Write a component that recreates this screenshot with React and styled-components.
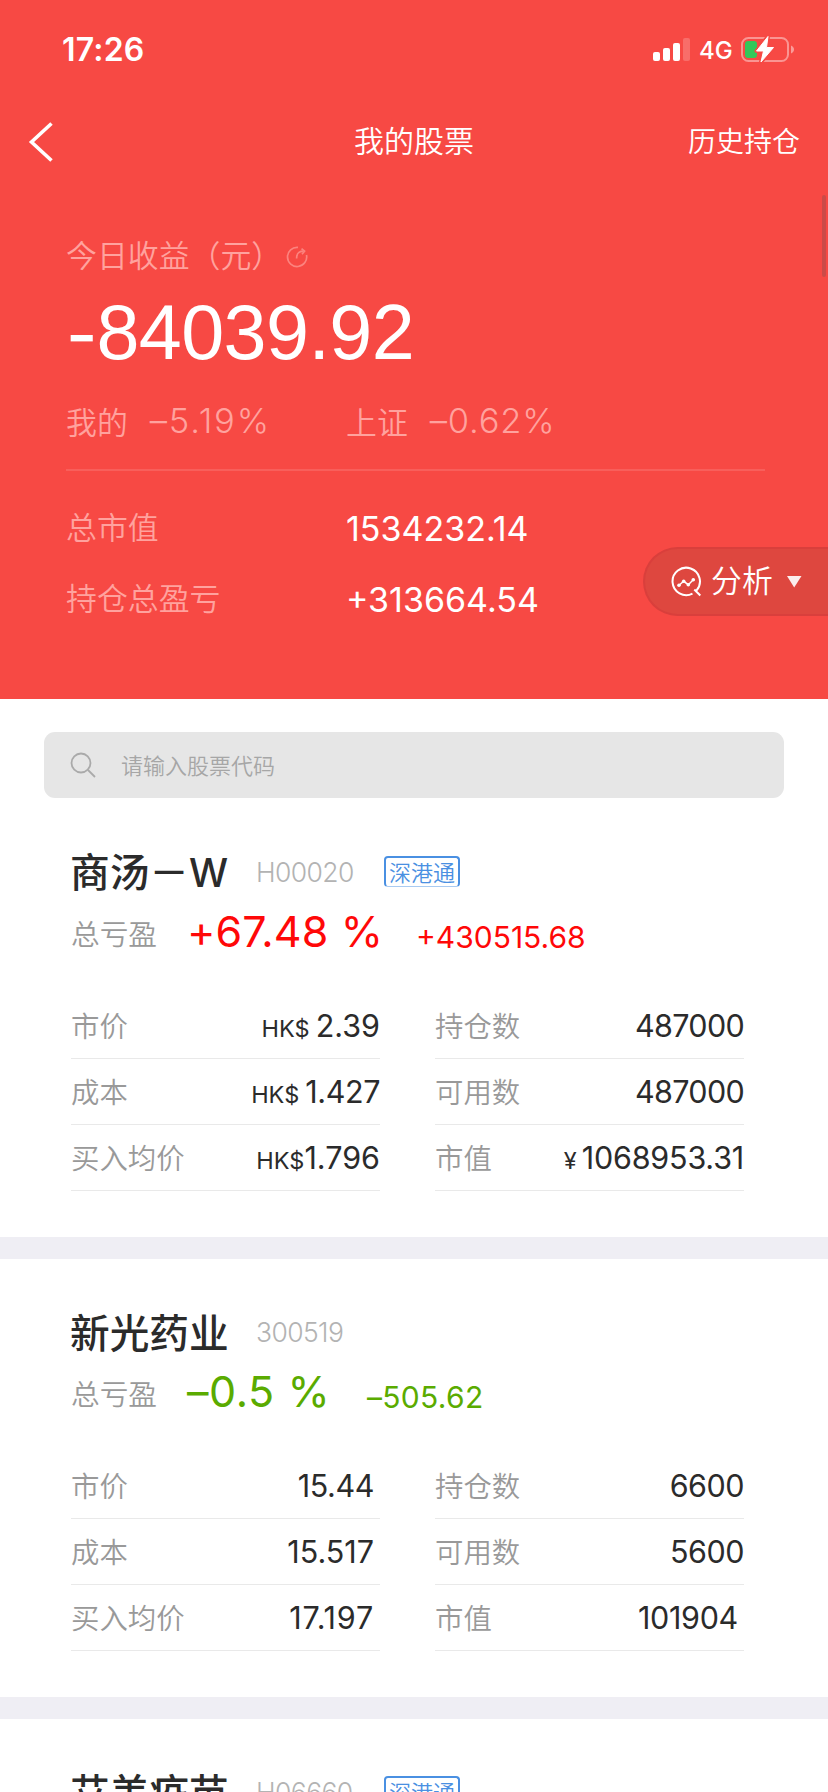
import React from "react";
import styled, { createGlobalStyle, css } from "styled-components";

const Global = createGlobalStyle`
  * { box-sizing: border-box; }
  body { margin: 0; background: #fff; }
`;

const latin = css`
  font-family: Inter, "Noto Sans CJK SC", sans-serif;
`;

const Page = styled.main`
  width: 828px;
  height: 1792px;
  overflow: hidden;
  background: #fff;
  font-family: "Noto Sans CJK SC", Inter, sans-serif;
  font-weight: 350;
  white-space: pre;
  position: relative;
`;

const Header = styled.header`
  height: 699px;
  background: #f74944;
  color: #fff;
  position: relative;
`;

const StatusBar = styled.div`
  height: 100px;
  padding: 0 33px 0 62px;
  display: flex;
  justify-content: space-between;
`;

const Clock = styled.div`
  ${latin}
  font-weight: 600;
  font-size: 32px;
  line-height: 40px;
  padding-top: 30px;
  letter-spacing: 0.2px;
`;

const StatusIcons = styled.div`
  display: flex;
  height: 28px;
  margin-top: 37px;
`;

const Network = styled.span`
  ${latin}
  font-weight: 450;
  font-size: 24px;
  line-height: 28px;
  width: 42px;
  margin-left: 8px;
`;

const NavBar = styled.nav`
  height: 80px;
  padding: 0 28px 0 28px;
  display: grid;
  grid-template-columns: 1fr auto 1fr;
  align-items: center;
  svg { display: block; margin-top: 2px; }
`;

const Title = styled.h1`
  margin: 0;
  font-size: 30px;
  font-weight: 350;
  line-height: 78px;
  padding-bottom: 3px;
`;

const NavLink = styled.span`
  justify-self: end;
  font-size: 28px;
  line-height: 78px;
  padding-bottom: 2px;
`;

const ScrollThumb = styled.div`
  position: absolute;
  right: 2px;
  top: 195px;
  width: 4px;
  height: 82px;
  border-radius: 2px;
  background: #cb4b48;
`;

const Summary = styled.section`
  padding: 53px 63px 0 66px;
`;

const Caption = styled.div`
  display: flex;
  align-items: center;
  font-size: 30.9px;
  line-height: 42px;
  color: #ffa29e;
  svg { margin: 5px 0 0 4px; }
`;

const BigAmount = styled.div`
  font-family: "Liberation Sans", Arial, sans-serif;
  font-weight: 400;
  font-size: 77.3px;
  line-height: 88px;
  margin-top: 13px;
  letter-spacing: -0.6px;
`;

const Minus = styled.span`
  ${latin}
  font-size: 68px;
  font-weight: 500;
  line-height: 60px;
  letter-spacing: -1px;
`;

const Compare = styled.div`
  display: grid;
  grid-template-columns: 280px 1fr;
  height: 84px;
  padding-top: 12px;
  margin-top: 11px;
  border-bottom: 2px solid #f85f5b;
  color: #ffa29e;
`;

const CompareItem = styled.div`
  display: flex;
  align-items: baseline;
  font-size: 30.9px;
  line-height: 44px;
`;

const Rate = styled.span`
  ${latin}
  font-size: 34.5px;
  margin-left: 22px;
  letter-spacing: ${(p) => p.$ls || 0}px;
  position: relative;
  top: -1px;
`;

const Totals = styled.div`
  display: grid;
  grid-template-columns: 280px 1fr;
  grid-auto-rows: 71px;
  padding-top: 19px;
`;

const TotalLabel = styled.span`
  font-size: 30.9px;
  line-height: 71px;
  color: #ffa29e;
`;

const TotalValue = styled.span`
  ${latin}
  font-weight: 400;
  font-size: 34px;
  line-height: 78px;
`;

const Analysis = styled.button`
  position: absolute;
  right: 0;
  top: 547px;
  width: 185px;
  height: 69px;
  padding: 0 0 0 26px;
  border: 2px solid #d93f3c;
  border-right: 0;
  border-radius: 35px 0 0 35px;
  background: #de473f;
  color: #fff;
  font: 350 30.9px/56px "Noto Sans CJK SC", sans-serif;
  display: flex;
  align-items: center;
`;

const AnalysisText = styled.span`
  margin: 0 13px 0 8px;
  padding-bottom: 5px;
`;

const Search = styled.div`
  margin: 33px 44px 0;
  height: 66px;
  border-radius: 11px;
  background: #e6e6e6;
  display: flex;
  align-items: center;
  padding-left: 26px;
  gap: 25px;
  font-size: 22px;
  color: #a6a6a6;
`;

const Placeholder = styled.span`
  line-height: 60px;
  padding-bottom: 3px;
`;

const Card = styled.article`
  height: 460px;
  padding: 36px 84px 0 71px;
  border-bottom: 22px solid #efeef4;
`;

const CardHead = styled.div`
  display: flex;
  align-items: center;
  height: 75px;
`;

const Name = styled.h2`
  margin: 0 0 0 -1px;
  font-family: "Noto Sans CJK SC", sans-serif;
  font-weight: 500;
  font-size: 39.7px;
  line-height: 60px;
  padding-bottom: 3px;
  color: #2b2b2b;
  width: 186px;
  span { ${latin} font-size: 39px; }
`;

const Code = styled.span`
  ${latin}
  font-weight: 300;
  font-size: 26.5px;
  line-height: 40px;
  padding-bottom: 2px;
  color: #b3b3b3;
  width: 128px;
  letter-spacing: -0.6px;
`;

const Tag = styled.span`
  width: 76px;
  height: 31px;
  border: 2px solid #4a90e2;
  border-bottom: 1px solid #a9cbf2;
  border-radius: 4px;
  font-size: 22px;
  line-height: 26px;
  text-align: center;
  color: #4a90e2;
  margin-top: -2px;
`;

const Gain = styled.div`
  display: flex;
  align-items: baseline;
  height: 65px;
  margin-top: -4px;
  color: ${(p) => (p.$down ? "#5aab00" : "#ff0808")};
`;

const GainLabel = styled.span`
  font-size: 28.7px;
  line-height: 50px;
  color: #999;
  width: 116px;
  position: relative;
  top: -2px;
`;

const Percent = styled.span`
  ${latin}
  font-weight: 400;
  font-size: 43px;
  line-height: 50px;
  width: ${(p) => p.$w}px;
  letter-spacing: ${(p) => (p.$w < 200 ? 0.6 : 0.1)}px;
`;

const Amount = styled.span`
  ${latin}
  font-weight: 400;
  font-size: 30px;
  letter-spacing: ${(p) => p.$ls || 0}px;
  position: relative;
  top: 1px;
`;

const Grid = styled.div`
  display: grid;
  grid-template-columns: 309px 309px;
  column-gap: 55px;
  grid-auto-rows: 66px;
  margin-top: 22px;
`;

const Cell = styled.div`
  display: flex;
  justify-content: space-between;
  align-items: baseline;
  border-bottom: 1px solid #e9e9e9;
  padding-right: ${(p) => (p.$inset ? 6 : 0)}px;
  font-size: 28.4px;
  line-height: 63px;
  color: #999;
`;

const Value = styled.span`
  ${latin}
  font-weight: 400;
  font-size: 30.5px;
  color: #2b2b2b;
  letter-spacing: ${(p) => p.$ls || 0}px;
`;

const Currency = styled.span`
  font-size: 23.5px;
  letter-spacing: 0;
  margin-right: ${(p) => p.$gap || 0}px;
`;

const BackIcon = () => (
  <svg width="26" height="40" viewBox="0 0 26 40" fill="none" stroke="#fff" strokeWidth="3.6">
    <path d="M23.500 1.500 3.500 20 23.500 38.500" />
  </svg>
);

const SignalIcon = () => (
  <svg width="38" height="26" fill="#fff">
    <rect x="0" y="15" width="7" height="9" rx="2" />
    <rect x="10" y="11" width="7" height="13" rx="2" />
    <rect x="20" y="6" width="7" height="18" rx="2" />
    <rect x="30" y="1" width="7" height="23" rx="2" opacity=".2" />
  </svg>
);

const BatteryIcon = () => (
  <svg width="54" height="28" viewBox="0 0 54 28" overflow="visible">
    <rect x="1" y="1" width="46" height="23" rx="6.500" fill="none" stroke="#fff" strokeOpacity=".42" strokeWidth="2" />
    <path d="M50 8.500c4 1.500 4 6.500 0 8z" fill="#fff" opacity=".45" />
    <rect x="4" y="4" width="12" height="17" rx="3" fill="#34c759" />
    <path d="M27 -.5 15.500 14H22.500L20 25 32.500 10.500H25.500Z" fill="#f74944" stroke="#f74944" strokeWidth="4" strokeLinejoin="round" />
    <path d="M27 -.5 15.500 14H22.500L20 25 32.500 10.500H25.500Z" fill="#fff" stroke="#fff" strokeWidth="1" strokeLinejoin="round" />
  </svg>
);

const RefreshIcon = () => (
  <svg width="22" height="22" viewBox="0 0 22 22" fill="none" stroke="currentColor" strokeWidth="1.7" opacity=".65">
    <path d="M12 1.400A9.600 9.600 0 1 0 20.500 9" />
    <path d="M10.600 12.500c0-5 2-7.300 7-7.300" />
    <path d="M15.500 2.600 18.600 5.200 16 8.200" />
  </svg>
);

const AnalysisIcon = () => (
  <svg width="32" height="32" viewBox="0 0 32 32" fill="none" stroke="#fff" strokeWidth="2">
    <path d="M21.500 27.600A13.700 13.700 0 1 1 25.400 24.600M23.300 23.500l6 6" />
    <path d="M8 19.300 12.700 15.300 17.300 18.700 22.300 13.700" strokeWidth="1.500" />
    <g fill="#fff" stroke="none">
      <circle cx="8" cy="19.300" r="1.800" />
      <circle cx="12.700" cy="15.300" r="1.800" />
      <circle cx="17.300" cy="18.700" r="1.800" />
      <circle cx="22.300" cy="13.700" r="1.800" />
    </g>
  </svg>
);

const SearchIcon = () => (
  <svg width="26" height="26" viewBox="0 0 26 26" fill="none" stroke="#aaa" strokeWidth="1.8">
    <circle cx="11" cy="11" r="9.500" />
    <path d="M18 18l7 7" />
  </svg>
);

const stocks = [
  {
    name: "商汤－", suffix: "W", code: "H00020", tag: true,
    pct: "+67.48 %", pctW: 229, amt: "+430515.68",
    rows: [
      { k: "市价", cur: "HK$", gap: 6, v: "2.39" },
      { k: "持仓数", v: "487000", ls: -0.7 },
      { k: "成本", cur: "HK$", gap: 6, v: "1.427", ls: -0.4 },
      { k: "可用数", v: "487000", ls: -0.7 },
      { k: "买入均价", cur: "HK$", v: "1.796" },
      { k: "市值", cur: "¥", gap: 5, v: "1068953.31", ls: -0.2 },
    ],
  },
  {
    name: "新光药业", code: "300519", down: true,
    pct: "–0.5 %", pctW: 180, amt: "–505.62", amtLs: 0.3,
    rows: [
      { k: "市价", v: "15.44", inset: true, ls: -0.4 },
      { k: "持仓数", v: "6600", ls: -0.5 },
      { k: "成本", v: "15.517", inset: true },
      { k: "可用数", v: "5600", ls: -0.5 },
      { k: "买入均价", v: "17.197", inset: true, ls: 0.8 },
      { k: "市值", v: "101904", inset: true, ls: -0.3 },
    ],
  },
  { name: "艾美疫苗", code: "H06660", tag: true, rows: [] },
];

const StockCard = ({ s }) => (
  <Card>
    <CardHead>
      <Name>{s.name}{s.suffix && <span>{s.suffix}</span>}</Name>
      <Code>{s.code}</Code>
      {s.tag && <Tag>深港通</Tag>}
    </CardHead>
    {s.pct && (
      <Gain $down={s.down}>
        <GainLabel>总亏盈</GainLabel>
        <Percent $w={s.pctW}>{s.pct}</Percent>
        <Amount $ls={s.amtLs}>{s.amt}</Amount>
      </Gain>
    )}
    <Grid>
      {s.rows.map((r) => (
        <Cell key={r.k} $inset={r.inset}>
          {r.k}
          <Value $ls={r.ls}>
            {r.cur && <Currency $gap={r.gap}>{r.cur}</Currency>}
            {r.v}
          </Value>
        </Cell>
      ))}
    </Grid>
  </Card>
);

const List = styled.div`
  padding-top: 1px;
`;

export default function App() {
  return (
    <Page>
      <Global />
      <Header>
        <StatusBar>
          <Clock>17:26</Clock>
          <StatusIcons>
            <SignalIcon />
            <Network>4G</Network>
            <BatteryIcon />
          </StatusIcons>
        </StatusBar>
        <NavBar>
          <BackIcon />
          <Title>我的股票</Title>
          <NavLink>历史持仓</NavLink>
        </NavBar>
        <Summary>
          <Caption>今日收益（元）<RefreshIcon /></Caption>
          <BigAmount><Minus>-</Minus>84039.92</BigAmount>
          <Compare>
            <CompareItem>我的<Rate $ls={1.8}>–5.19%</Rate></CompareItem>
            <CompareItem>上证<Rate $ls={0.8}>–0.62%</Rate></CompareItem>
          </Compare>
          <Totals>
            <TotalLabel>总市值</TotalLabel>
            <TotalValue>1534232.14</TotalValue>
            <TotalLabel>持仓总盈亏</TotalLabel>
            <TotalValue>+313664.54</TotalValue>
          </Totals>
        </Summary>
        <ScrollThumb />
        <Analysis>
          <AnalysisIcon />
          <AnalysisText>分析</AnalysisText>
          <svg width="16" height="12" fill="#fff" opacity=".9"><path d="M1 0h14.500L8.200 11.500z" /></svg>
        </Analysis>
      </Header>
      <Search><SearchIcon /><Placeholder>请输入股票代码</Placeholder></Search>
      <List>
        {stocks.map((s) => <StockCard key={s.code} s={s} />)}
      </List>
    </Page>
  );
}
